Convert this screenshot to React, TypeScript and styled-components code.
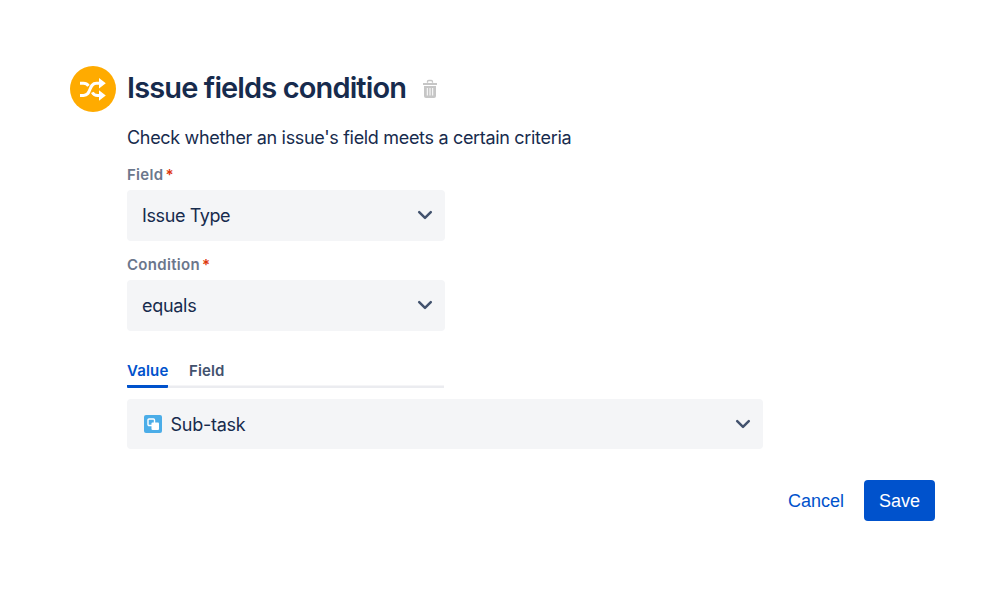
import React from 'react';
import styled, { createGlobalStyle } from 'styled-components';

const GlobalStyle = createGlobalStyle`
  * { box-sizing: border-box; }
  body {
    margin: 0;
    background: #fff;
    color: #172b4d;
    font-family: Inter, "Liberation Sans", sans-serif;
    -webkit-font-smoothing: antialiased;
  }
`;

const Page = styled.main`
  width: 999px;
  height: 596px;
  padding: 66px 64px 0 70px;
`;

const Header = styled.header`
  display: flex;
  align-items: center;
  height: 46px;
`;

const Badge = styled.span`
  display: flex;
  flex: none;
  width: 46px;
  height: 46px;
  margin-right: 11px;
  border-radius: 50%;
  background: #ffab00;
`;

const Title = styled.h1`
  width: 279px;
  margin: 0 17px 3px 0;
  font-size: 29px;
  line-height: 36px;
  font-weight: 600;
  letter-spacing: -0.88px;
  white-space: nowrap;
`;

const DeleteButton = styled.button`
  display: flex;
  padding: 0;
  border: 0;
  background: none;
`;

const Form = styled.form`
  display: flex;
  flex-direction: column;
  margin-left: 57px;
`;

const Description = styled.p`
  margin: 14px 0 0.5px;
  font-size: 18px;
  line-height: 24px;
  letter-spacing: -0.32px;
  white-space: nowrap;
`;

const Label = styled.label`
  display: flex;
  height: 20px;
  margin: 14.5px 0 5px;
  color: #6b778c;
  font-size: 15px;
  line-height: 20px;
  font-weight: 600;
  letter-spacing: 0.3px;
`;

const Required = styled.span`
  margin-left: 2px;
  color: #de350b;
`;

const Select = styled.div<{ $width: number }>`
  display: flex;
  align-items: center;
  width: ${(p) => p.$width}px;
  height: 50.5px;
  padding: 0 12px 0 15px;
  border-radius: 4px;
  background: #f4f5f7;
  font-size: 18px;
  line-height: 24px;
`;

const SelectText = styled.span<{ $spacing: number }>`
  flex: 1;
  padding-top: 1.5px;
  letter-spacing: ${(p) => p.$spacing}px;
`;

const Tabs = styled.div`
  display: flex;
  gap: 20.5px;
  width: 317px;
  height: 31px;
  margin: 26.5px 0 10.5px;
  box-shadow: inset 0 -2.5px #ebecf0;
`;

const Tab = styled.span<{ $active?: boolean }>`
  height: 31px;
  padding-top: 4px;
  color: ${(p) => (p.$active ? '#0052cc' : '#42526e')};
  border-bottom: ${(p) => (p.$active ? '3px solid #0052cc' : '0')};
  border-radius: 1px;
  font-size: 15px;
  line-height: 20px;
  font-weight: 600;
  letter-spacing: 0.15px;
`;

const Actions = styled.footer`
  display: flex;
  justify-content: flex-end;
  align-items: center;
  gap: 20px;
  margin-top: 31px;
`;

const Button = styled.button<{ $primary?: boolean }>`
  height: 41px;
  width: ${(p) => (p.$primary ? '71px' : 'auto')};
  padding: 0;
  border: 0;
  border-radius: 4px;
  background: ${(p) => (p.$primary ? '#0052cc' : 'transparent')};
  color: ${(p) => (p.$primary ? '#fff' : '#0052cc')};
  font: 18px/24px "Liberation Sans", sans-serif;
`;

const IssueIcon = styled.svg`
  flex: none;
  margin: 0 9px 0 1.5px;
`;

const ShuffleIcon = () => (
  <svg width="46" height="46" viewBox="0 0 46 46" fill="none" stroke="#fff" strokeWidth="3">
    <path d="M10 29.500h3.500c8.500 0 4.500-12.300 13-12.300H30" />
    <path d="M10 17.200h3.500q3.200 0 5 2.600M22.300 26.400q1.700 3.100 5.200 3.100H30" />
    <path d="M29 12 35.800 17.200 29 22.400zM29 24.300l6.800 5.200-6.800 5.200z" fill="#fff" stroke="none" />
  </svg>
);

const TrashIcon = () => (
  <svg width="14" height="20" viewBox="0 0 14 20" fill="none">
    <path d="M4.500 3.800V2.700Q4.500 1.500 5.700 1.500H8.300Q9.500 1.500 9.500 2.700V3.800" stroke="#c6c6c6" strokeWidth="1.300" />
    <path d="M0 4h14v2H0z" fill="#c6c6c6" />
    <path d="M1 7h12v10q0 2-2 2H3q-2 0-2-2z" fill="#c6c6c6" />
    <path d="M4.300 9v7.500M7 9v7.500M9.700 9v7.500" stroke="#fff" strokeWidth="1" />
  </svg>
);

const Chevron = () => (
  <svg width="16" height="16" viewBox="0 0 16 16" fill="none">
    <path d="m2.200 5.200 5.800 5.700 5.800-5.700" stroke="#42526e" strokeWidth="2.500" strokeLinecap="round" strokeLinejoin="round" />
  </svg>
);

const SubtaskIcon = () => (
  <IssueIcon width="18" height="18" viewBox="0 0 18 18" fill="none">
    <rect width="18" height="18" rx="2" fill="#4bade8" />
    <rect x="4" y="4" width="6.500" height="6.500" rx="1" stroke="#fff" strokeWidth="1.400" />
    <rect x="7.500" y="7.500" width="7.500" height="7.500" rx="1" fill="#fff" />
  </IssueIcon>
);

export default function App() {
  return (
    <Page>
      <GlobalStyle />
      <Header>
        <Badge><ShuffleIcon /></Badge>
        <Title>Issue fields condition</Title>
        <DeleteButton type="button" aria-label="Delete"><TrashIcon /></DeleteButton>
      </Header>
      <Form>
        <Description>Check whether an issue's field meets a certain criteria</Description>
        <Label>Field<Required>*</Required></Label>
        <Select $width={318}>
          <SelectText $spacing={-0.4}>Issue Type</SelectText>
          <Chevron />
        </Select>
        <Label>Condition<Required>*</Required></Label>
        <Select $width={318}>
          <SelectText $spacing={-0.3}>equals</SelectText>
          <Chevron />
        </Select>
        <Tabs>
          <Tab $active>Value</Tab>
          <Tab>Field</Tab>
        </Tabs>
        <Select $width={636.4}>
          <SubtaskIcon />
          <SelectText $spacing={-0.25}>Sub-task</SelectText>
          <Chevron />
        </Select>
      </Form>
      <Actions>
        <Button type="button">Cancel</Button>
        <Button type="button" $primary>Save</Button>
      </Actions>
    </Page>
  );
}
